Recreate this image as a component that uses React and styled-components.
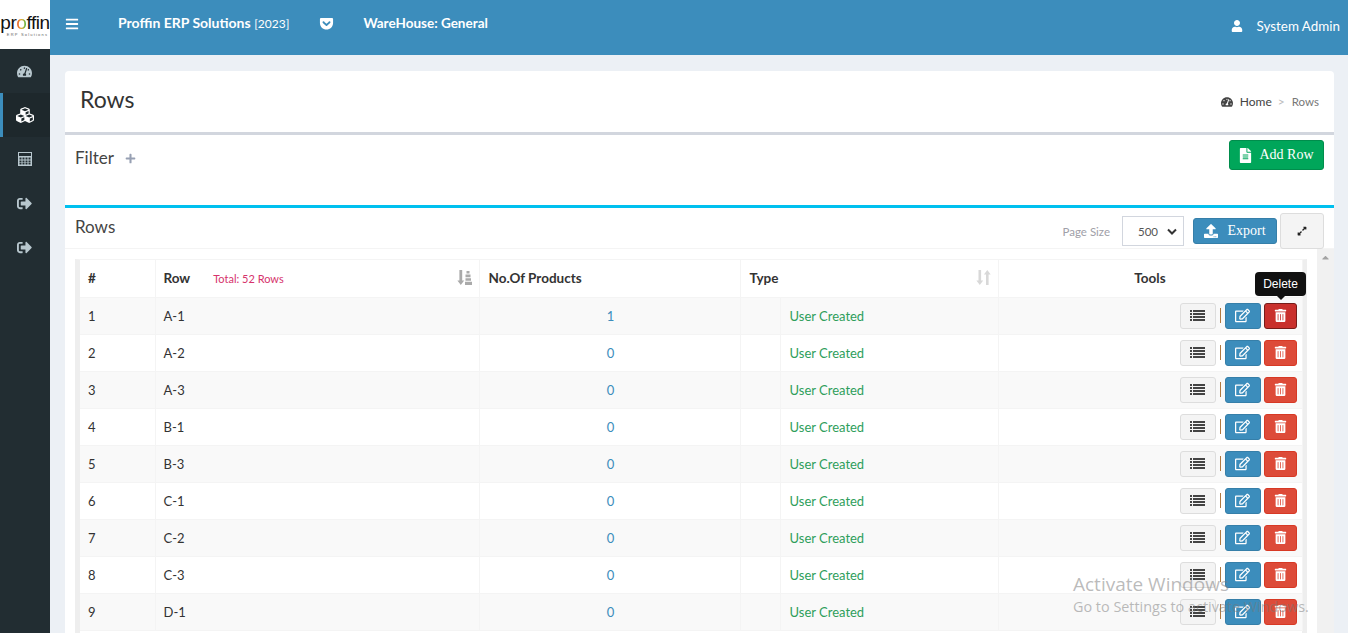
import React from 'react';
import styled, { createGlobalStyle } from 'styled-components';
import {
  FaBars, FaGetPocket, FaUser, FaTachometerAlt, FaCubes, FaPlus, FaFileAlt,
  FaUpload, FaExpandAlt, FaRegEdit, FaTrashAlt, FaCaretUp, FaSignOutAlt,
} from 'react-icons/fa';

const Global = createGlobalStyle`
  html, body { margin: 0; padding: 0; height: 633px; overflow: hidden; background: #ecf0f5; }
  body { font-family: Lato, "Open Sans", sans-serif; font-size: 13px; color: #333; }
  * { box-sizing: border-box; }
`;

const Shell = styled.div`display: flex; width: 1348px; height: 633px; overflow: hidden; position: relative;`;
const Sidebar = styled.aside`width: 50px; flex: none; background: #222d32; display: flex; flex-direction: column;`;
const LogoBox = styled.div`height: 49px; background: #fff; display: flex; flex-direction: column; align-items: center; justify-content: center; overflow: hidden;`;
const LogoWord = styled.div`font-family: "Liberation Sans", sans-serif; font-size: 19px; line-height: 18px; color: #111; letter-spacing: -0.45px; margin-top: 1px; white-space: nowrap;`;
const LogoO = styled.span`
  background: linear-gradient(90deg, #e5492c, #e9a52b 50%, #58b947);
  -webkit-background-clip: text; background-clip: text; color: transparent;
`;
const LogoSub = styled.div`font-family: "Liberation Sans", sans-serif; font-size: 4px; letter-spacing: 1.2px; line-height: 5px; color: #666; white-space: nowrap; margin-left: 5px;`;
const NavItem = styled.div`
  height: 44px; display: flex; align-items: center; justify-content: center;
  background: ${p => (p.$active ? '#1e282c' : 'transparent')};
  border-left: 3px solid ${p => (p.$active ? '#3c8dbc' : 'transparent')};
  padding-right: 4px;
  color: ${p => (p.$active ? '#fff' : '#b8c7ce')};
  font-size: ${p => (p.$active ? '18px' : '15px')};
`;
const CalcIcon = styled.svg`width: 14px; height: 14px; display: block;`;
const Main = styled.div`flex: 1; min-width: 0; display: flex; flex-direction: column;`;
const TopBar = styled.header`height: 55px; flex: none; background: #3c8dbc; color: #fff; display: flex; align-items: flex-start; padding: 14px 8px 0 15px; font-size: 14px;`;
const Burger = styled.span`font-size: 14px; line-height: 18px; display: flex; height: 18px; align-items: center; margin-top: 1px;`;
const Brand = styled.span`margin-left: 39px; line-height: 18px; white-space: nowrap;`;
const Bold = styled.b`font-weight: 700;`;
const BrandYear = styled.span`font-size: 12px;`;
const PocketIcon = styled.span`margin-left: 30px; font-size: 15px; display: flex; height: 18px; align-items: center;`;
const Ware = styled.b`margin-left: 29px; font-weight: 700; font-size: 13.5px; line-height: 18px;`;
const UserBox = styled.div`margin-left: auto; display: flex; align-items: center; gap: 14px; padding-top: 3px; line-height: 18px; font-size: 13.4px;`;
const UserIcon = styled.span`font-size: 12px; display: flex;`;
const Content = styled.main`flex: 1; min-height: 0; padding: 16px 14px 0 15px;`;
const Card = styled.section`background: #fff; border-radius: 4px 4px 0 0; height: 100%; display: flex; flex-direction: column;`;
const PageHead = styled.div`height: 64px; flex: none; border-bottom: 3px solid #d2d6de; display: flex; align-items: center; justify-content: space-between; padding: 0 15px 3px 15px;`;
const PageTitle = styled.h1`margin: -3px 0 0; font-weight: 400; font-size: 23px; line-height: 28px; color: #333;`;
const Crumbs = styled.div`display: flex; align-items: center; font-size: 12px; color: #444; margin-top: 3px;`;
const CrumbIcon = styled.span`font-size: 12px; display: flex; margin-right: 7px;`;
const CrumbSep = styled.span`color: #bbb; margin: 0 7px 0 6px;`;
const CrumbLast = styled.span`color: #777; font-size: 11.5px;`;
const FilterBox = styled.div`height: 73px; flex: none; border-bottom: 3px solid #00c0ef; display: flex; justify-content: space-between; align-items: flex-start; padding: 5px 10px 0 10px; position: relative;`;
const BoxTitle = styled.div`font-size: 17px; line-height: 22px; color: #444; display: flex; align-items: center;`;
const FilterTitle = styled(BoxTitle)`margin-top: 7px;`;
const PlusMark = styled.span`font-size: 11px; color: #97a0b3; margin-left: 11px; display: flex;`;
const GreenBtn = styled.button`
  width: 95px; height: 30px; background: #00a65a; border: 1px solid #008d4c; border-radius: 3px; color: #fff;
  font-family: "Liberation Serif", serif; font-size: 14px; display: flex; align-items: center; justify-content: center; gap: 6px; padding: 0 1px 0 0;
  svg { font-size: 15px; }
`;
const BlockHead = styled.div`height: 41px; flex: none; border-bottom: 1px solid #f4f4f4; margin-top: 0; display: flex; align-items: flex-start; padding: 0 10px; position: relative;`;
const RowsTitle = styled(BoxTitle)`margin-top: 8px;`;
const Tools = styled.div`margin-left: auto; display: flex; align-items: flex-start; padding-top: 5px;`;
const SizeLabel = styled.span`font-size: 11.5px; color: #a0a0a8; margin: 12px 12px 0 0;`;
const SizeSelect = styled.div`width: 62px; height: 30px; margin-top: 3px; border: 1px solid #d2d6de; display: flex; align-items: center; justify-content: space-between; padding: 0 6px 0 15px; font-size: 11.5px; color: #555; background: #fff;`;
const Chevron = styled.svg`width: 10px; height: 7px;`;
const ExportBtn = styled.button`
  width: 84px; height: 26px; margin: 5px 3px 0 9px; background: #3c8dbc; border: 1px solid #367fa9; border-radius: 3px; color: #fff;
  font-family: "Liberation Serif", serif; font-size: 14px; display: flex; align-items: center; justify-content: center; gap: 9px; padding: 0;
`;
const ExpandBtn = styled.button`width: 44px; height: 36px; background: #f4f4f4; border: 1px solid #ddd; border-radius: 3px; color: #222; font-size: 10px; display: flex; align-items: center; justify-content: center; padding: 0;`;
const TableZone = styled.div`flex: 1; min-height: 0; display: flex; padding-left: 10px; overflow: hidden;`;
const TableWrap = styled.div`width: 1232px; flex: none; margin-top: 10px; border-left: 5px solid #eee; border-right: 5px solid #eee; border-top: 1px solid #f4f4f4; position: relative;`;
const Table = styled.table`border-collapse: collapse; table-layout: fixed; width: 1222px; font-size: 13px; color: #333;`;
const HeadCell = styled.th`
  height: 37px; padding: 0 ${p => (p.$shift ? '7px' : '8px')} 0 ${p => (p.$shift ? '9px' : '8px')}; font-weight: 700; font-size: 13.5px; text-align: ${p => p.$align || 'left'}; color: #333;
  border-right: 1px solid #f4f4f4; border-bottom: 1px solid #f4f4f4; position: relative; white-space: nowrap;
`;
const Total = styled.span`font-weight: 400; font-size: 11px; color: #d6336c; margin-left: 23px;`;
const SortMark = styled.svg`position: absolute; right: 7px; top: 10px; width: 15px; height: 15px; color: ${p => p.$color};`;
const BodyRow = styled.tr`background: ${p => (p.$odd ? '#f9f9f9' : '#fff')};`;
const Cell = styled.td`
  height: 37px; padding: 0 ${p => (p.$shift ? '7px' : '8px')} 0 ${p => (p.$shift ? '9px' : '8px')}; border-right: 1px solid #f4f4f4; border-bottom: 1px solid #f4f4f4;
  text-align: ${p => p.$align || 'left'}; color: ${p => p.$color || '#333'}; white-space: nowrap;
`;
const ToolCell = styled(Cell)`padding: 0 5px 0 8px;`;
const ToolRow = styled.div`display: flex; justify-content: flex-end; align-items: center;`;
const IconBtn = styled.button`
  width: ${p => p.$w}px; height: 26px; border-radius: 3px; padding: 0; display: flex; align-items: center; justify-content: center;
  font-size: ${p => p.$size || 13}px; background: ${p => p.$bg}; border: 1px solid ${p => p.$line}; color: ${p => p.$fg};
`;
const ListIcon = styled.svg`width: 15px; height: 11px; display: block;`;
const Divider = styled.span`width: 1px; height: 15px; background: #b0793f; margin: 0 4px 0 4px;`;
const Gap = styled.span`width: 3px;`;
const Tooltip = styled.div`
  position: absolute; left: 1175px; top: 12px; width: 51px; height: 24px; border-radius: 4px; background: #111; color: #fff;
  font-family: "Liberation Sans", sans-serif; font-size: 12px; display: flex; align-items: center; justify-content: center;
  &::after { content: ""; position: absolute; left: 50%; bottom: -4px; margin-left: -4px; border: 4px solid transparent; border-bottom: 0; border-top-color: #111; }
`;
const Scrollbar = styled.div`width: 17px; flex: none; margin-left: 10px; background: #f1f1f1; display: flex; justify-content: center; color: #a3a3a3; font-size: 11px; padding-top: 3px;`;
const Watermark = styled.div`position: absolute; left: 1073px; top: 572px; color: rgba(120,120,120,0.5); font-family: "Open Sans", sans-serif; pointer-events: none; white-space: nowrap;`;
const WmTitle = styled.div`font-size: 19px; line-height: 24px;`;
const WmSub = styled.div`font-size: 14.4px; line-height: 21px;`;

const rows = [['1','A-1','1'],['2','A-2','0'],['3','A-3','0'],['4','B-1','0'],['5','B-3','0'],['6','C-1','0'],['7','C-2','0'],['8','C-3','0'],['9','D-1','0']];

export default function App() {
  return (
    <Shell>
      <Global />
      <Sidebar>
        <LogoBox>
          <LogoWord>pr<LogoO>o</LogoO>ffin</LogoWord>
          <LogoSub>ERP Solutions</LogoSub>
        </LogoBox>
        <NavItem><FaTachometerAlt /></NavItem>
        <NavItem $active><FaCubes /></NavItem>
        <NavItem>
          <CalcIcon viewBox="0 0 14 14">
            <path fill="currentColor" fillRule="evenodd" d="M0 0h14v14H0zM1 1v3h12V1zM1.5 5.5v2h2v-2zM4.5 5.5v2h2v-2zM7.5 5.5v2h2v-2zM10.5 5.5v2h2v-2zM1.5 8.5v2h2v-2zM4.5 8.5v2h2v-2zM7.5 8.5v2h2v-2zM10.5 8.5v2h2v-2zM1.5 11v1.5h2V11zM4.5 11v1.5h2V11zM7.5 11v1.5h2V11zM10.5 11v1.5h2V11z" />
          </CalcIcon>
        </NavItem>
        <NavItem><FaSignOutAlt /></NavItem>
        <NavItem><FaSignOutAlt /></NavItem>
      </Sidebar>
      <Main>
        <TopBar>
          <Burger><FaBars /></Burger>
          <Brand><Bold>Proffin ERP Solutions</Bold> <BrandYear>[2023]</BrandYear></Brand>
          <PocketIcon><FaGetPocket /></PocketIcon>
          <Ware>WareHouse: General</Ware>
          <UserBox><UserIcon><FaUser /></UserIcon>System Admin</UserBox>
        </TopBar>
        <Content>
          <Card>
            <PageHead>
              <PageTitle>Rows</PageTitle>
              <Crumbs><CrumbIcon><FaTachometerAlt /></CrumbIcon>Home<CrumbSep>&gt;</CrumbSep><CrumbLast>Rows</CrumbLast></Crumbs>
            </PageHead>
            <FilterBox>
              <FilterTitle>Filter<PlusMark><FaPlus /></PlusMark></FilterTitle>
              <GreenBtn><FaFileAlt />Add Row</GreenBtn>
            </FilterBox>
            <BlockHead>
              <RowsTitle>Rows</RowsTitle>
              <Tools>
                <SizeLabel>Page Size</SizeLabel>
                <SizeSelect>500
                  <Chevron viewBox="0 0 10 7"><path d="M1 1.5 L5 5.5 L9 1.5" fill="none" stroke="#333" strokeWidth="2" /></Chevron>
                </SizeSelect>
                <ExportBtn><FaUpload />Export</ExportBtn>
                <ExpandBtn><FaExpandAlt /></ExpandBtn>
              </Tools>
            </BlockHead>
            <TableZone>
              <TableWrap>
                <Table>
                  <colgroup>
                    <col width="75" /><col width="324" /><col width="261" /><col width="40" /><col width="218" /><col width="304" />
                  </colgroup>
                  <thead>
                    <tr>
                      <HeadCell>#</HeadCell>
                      <HeadCell>Row<Total>Total: 52 Rows</Total>
                        <SortMark $color="#aaa" viewBox="0 0 15 15">
                          <path fill="currentColor" d="M2.4 0h2.8v10.5h2L3.8 15 .4 10.5h2zM9.5 1h3v2.6h-3zM8.5 4.6h5v2.6h-5zM8.5 8.2h5.5v2.6H8.5zM8 11.8h7V15H8z" />
                        </SortMark>
                      </HeadCell>
                      <HeadCell $shift>No.Of Products</HeadCell>
                      <HeadCell $shift colSpan={2}>Type
                        <SortMark $color="#d8d8d8" viewBox="0 0 15 15">
                          <path fill="currentColor" d="M2.5 0h2.6v10.5h2.1L3.8 15 .4 10.5h2.1zM10 4.5V15h2.6V4.5h2.1L11.3 0 7.9 4.5z" />
                        </SortMark>
                      </HeadCell>
                      <HeadCell $align="center">Tools</HeadCell>
                    </tr>
                  </thead>
                  <tbody>
                    {rows.map((r, i) => (
                      <BodyRow key={r[0]} $odd={i % 2 === 0}>
                        <Cell>{r[0]}</Cell>
                        <Cell>{r[1]}</Cell>
                        <Cell $shift $align="center" $color="#3c8dbc">{r[2]}</Cell>
                        <Cell />
                        <Cell $shift $color="#2e9e5b">User Created</Cell>
                        <ToolCell>
                          <ToolRow>
                            <IconBtn $w={36} $bg="#f4f4f4" $line="#ddd" $fg="#444">
                              <ListIcon viewBox="0 0 15 11">
                                <path fill="currentColor" d="M0 0h2v2H0zM3 0h12v2H3zM0 3h2v2H0zM3 3h12v2H3zM0 6h2v2H0zM3 6h12v2H3zM0 9h2v2H0zM3 9h12v2H3z" />
                              </ListIcon>
                            </IconBtn>
                            <Divider />
                            <IconBtn $w={36} $size={15} $bg="#3c8dbc" $line="#367fa9" $fg="#fff"><FaRegEdit /></IconBtn>
                            <Gap />
                            <IconBtn $w={33} $bg={i === 0 ? '#c9302c' : '#dd4b39'} $line={i === 0 ? '#761c19' : '#d73925'} $fg="#fff"><FaTrashAlt /></IconBtn>
                          </ToolRow>
                        </ToolCell>
                      </BodyRow>
                    ))}
                  </tbody>
                </Table>
                <Tooltip>Delete</Tooltip>
              </TableWrap>
              <Scrollbar><FaCaretUp /></Scrollbar>
            </TableZone>
          </Card>
        </Content>
      </Main>
      <Watermark>
        <WmTitle>Activate Windows</WmTitle>
        <WmSub>Go to Settings to activate Windows.</WmSub>
      </Watermark>
    </Shell>
  );
}
